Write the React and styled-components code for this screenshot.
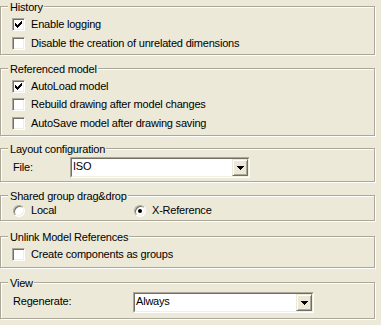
import styled, { createGlobalStyle } from "styled-components";

const GlobalStyle = createGlobalStyle`
  body {
    margin: 0;
    background: #ece9d8;
    font-family: "Liberation Sans", Arial, sans-serif;
    font-size: 11px;
    letter-spacing: -0.2px;
    color: #000;
  }
`;

// classic windows check mark, one 3px column per x
const checkCols = [2, 3, 4, 3, 2, 1, 0];
const checkPath = checkCols.map((y, x) => `M${x} ${y}h1v3h-1z`).join("");

export default function App() {
    return (
        <Page>
            <GlobalStyle />
            <Group $h={49}>
                <Legend>History</Legend>
                <Body $top={1}>
                    <Check checked label="Enable logging" />
                    <Check label="Disable the creation of unrelated dimensions" />
                </Body>
            </Group>

            <Group $h={68} $mt={13}>
                <Legend>Referenced model</Legend>
                <Body $top={1}>
                    <Check checked h={18} label="AutoLoad model" />
                    <Check label="Rebuild drawing after model changes" />
                    <Check label="AutoSave model after drawing saving" />
                </Body>
            </Group>

            <Group $h={34} $mt={12}>
                <Legend>Layout configuration</Legend>
                <Body $top={1}>
                    <Row $h={21}>
                        <FieldLabel $w={57} $lh={21}>File:</FieldLabel>
                        <Combo width={180} value="ISO" />
                    </Row>
                </Body>
            </Group>

            <Group $h={26} $mt={13}>
                <Legend>Shared group drag&amp;drop</Legend>
                <Body $top={0}>
                    <Row $h={15}>
                        <RadioItem $w={121}>
                            <Radio />
                            Local
                        </RadioItem>
                        <RadioItem>
                            <Radio $on />
                            X-Reference
                        </RadioItem>
                    </Row>
                </Body>
            </Group>

            <Group $h={32} $mt={15}>
                <Legend>Unlink Model References</Legend>
                <Body $top={1}>
                    <Check label="Create components as groups" />
                </Body>
            </Group>

            <Group $h={37} $mt={14}>
                <Legend>View</Legend>
                <Body $top={2}>
                    <Row $h={21}>
                        <FieldLabel $w={120} $lh={19}>Regenerate:</FieldLabel>
                        <Combo width={181} value="Always" />
                    </Row>
                </Body>
            </Group>
        </Page>
    );
}

const Check = ({ label, checked, h = 19 }) => (
    <Row $h={h}>
        <Box>
            {checked && (
                <svg width="7" height="7" viewBox="0 0 7 7" shapeRendering="crispEdges">
                    <path d={checkPath} fill="#000" />
                </svg>
            )}
        </Box>
        {label}
    </Row>
);

const Combo = ({ width, value }) => (
    <ComboFrame style={{ width }}>
        <ComboInner>
            <ComboText>{value}</ComboText>
            <DropBtn>
                <svg width="7" height="4" viewBox="0 0 7 4" shapeRendering="crispEdges">
                    <path d="M0 0h7v1h-7zM1 1h5v1h-5zM2 2h3v1h-3zM3 3h1v1h-1z" fill="#000" />
                </svg>
            </DropBtn>
        </ComboInner>
    </ComboFrame>
);

const Page = styled.div`
    width: 381px;
    height: 325px;
    padding-top: 6px;
    box-sizing: border-box;
    overflow: hidden;
`;

const Group = styled.section`
    display: flex;
    flex-direction: column;
    align-items: flex-start;
    box-sizing: border-box;
    width: 375px;
    height: ${p => p.$h}px;
    margin-top: ${p => p.$mt || 0}px;
    padding-left: 11px;
    border: 1px solid #aca899;
    box-shadow: inset 1px 1px 0 #fff, 1px 1px 0 #fff;
`;

const Legend = styled.div`
    height: 13px;
    line-height: 13px;
    margin: -6px 0 0 -4px;
    padding: 0 1px 0 2px;
    background: #ece9d8;
    white-space: nowrap;
`;

const Body = styled.div`
    display: flex;
    flex-direction: column;
    align-self: stretch;
    margin-top: ${p => p.$top}px;
`;

const Row = styled.div`
    display: flex;
    align-items: center;
    height: ${p => p.$h}px;
    line-height: ${p => p.$h}px;
    white-space: nowrap;
`;

const Box = styled.span`
    flex: none;
    box-sizing: border-box;
    width: 13px;
    height: 13px;
    padding: 2px;
    margin-right: 6px;
    border: 1px solid;
    border-color: #aca899 #fff #fff #aca899;
    box-shadow: inset 1px 1px 0 #716f64, inset -1px -1px 0 #f1efe2;
    background: #fff;

    svg {
        display: block;
    }
`;

const RadioItem = styled.div`
    display: flex;
    align-items: center;
    width: ${p => (p.$w ? `${p.$w}px` : "auto")};
`;

const Radio = styled.span`
    flex: none;
    box-sizing: border-box;
    width: 12px;
    height: 12px;
    margin: 0 6px 0 1px;
    border-radius: 50%;
    border: 1px solid;
    border-color: #aca899 #fff #fff #aca899;
    box-shadow: inset 1px 1px 0 #716f64, inset -1px -1px 0 #f1efe2;
    background: #fff;
    display: flex;
    align-items: center;
    justify-content: center;

    &::after {
        content: "";
        display: ${p => (p.$on ? "block" : "none")};
        width: 4px;
        height: 4px;
        border-radius: 50%;
        background: #000;
    }
`;

const FieldLabel = styled.span`
    width: ${p => p.$w}px;
    margin-left: 1px;
    line-height: ${p => p.$lh}px;
    align-self: flex-start;
`;

const ComboFrame = styled.div`
    box-sizing: border-box;
    height: 21px;
    border: 1px solid;
    border-color: #aca899 #fff #fff #aca899;
`;

const ComboInner = styled.div`
    display: flex;
    height: 100%;
    box-sizing: border-box;
    border: 1px solid;
    border-color: #716f64 #f1efe2 #f1efe2 #716f64;
    background: #fff;
`;

const ComboText = styled.div`
    flex: 1;
    padding-left: 1px;
    line-height: 15px;
`;

const DropBtn = styled.div`
    flex: none;
    box-sizing: border-box;
    width: 16px;
    height: 100%;
    display: flex;
    align-items: center;
    justify-content: center;
    background: #ece9d8;
    border: 1px solid;
    border-color: #ece9d8 #716f64 #716f64 #ece9d8;
    box-shadow: inset 1px 1px 0 #fff, inset -1px -1px 0 #aca899;

    svg {
        display: block;
    }
`;
